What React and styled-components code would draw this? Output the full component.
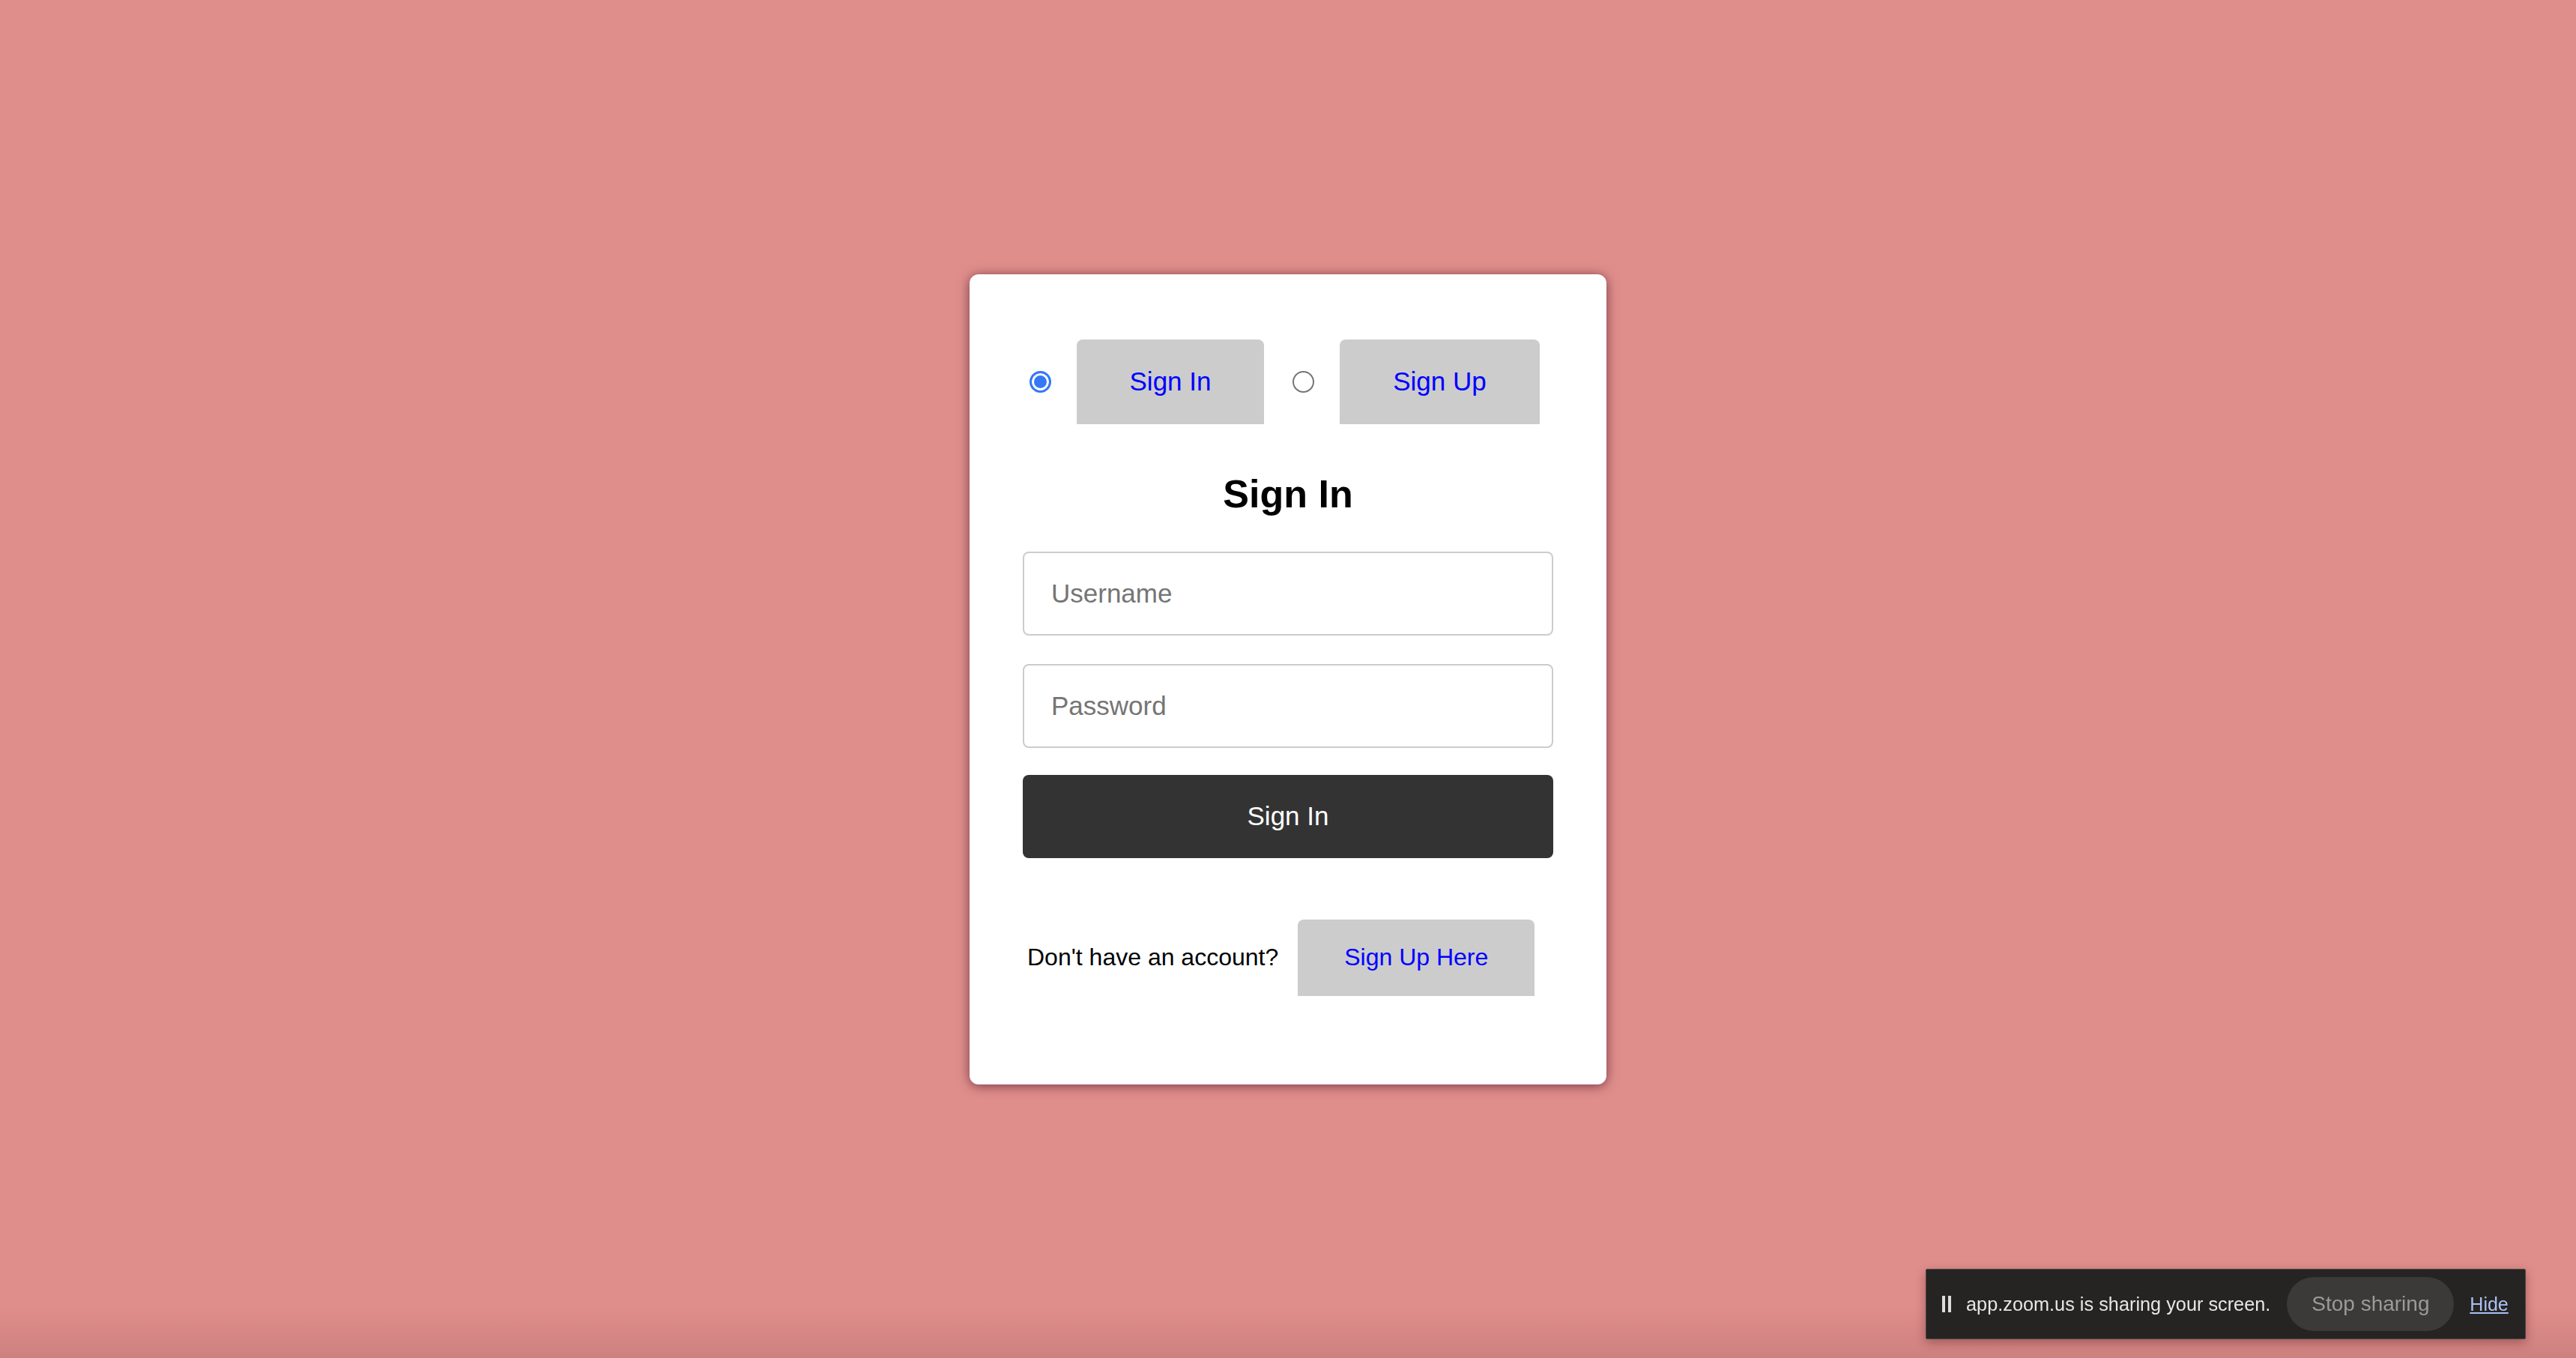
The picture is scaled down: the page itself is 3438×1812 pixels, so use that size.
import React, { useState } from "react";
import styled, { createGlobalStyle } from "styled-components";

const GlobalStyle = createGlobalStyle`
  html, body {
    margin: 0;
    padding: 0;
  }
  body {
    font-family: "Liberation Sans", Arial, Helvetica, sans-serif;
    background: linear-gradient(to bottom, #e08e8b 0, #e08e8b calc(100% - 70px), #cd817f 100%);
    min-height: 1812px;
  }
`;

const Page = styled.div`
  min-height: 1812px;
  display: flex;
  align-items: center;
  justify-content: center;
`;

const Card = styled.div`
  box-sizing: border-box;
  width: 850px;
  height: 1081px;
  background: #ffffff;
  border-radius: 12px;
  box-shadow: 0 2px 16px rgba(50, 0, 25, 0.6);
  padding: 87px 71px 0 71px;
  display: flex;
  flex-direction: column;
`;

const TabRow = styled.div`
  display: flex;
  align-items: center;
  padding-left: 9px;
`;

const Radio = styled.input.attrs({ type: "radio" })`
  appearance: none;
  -webkit-appearance: none;
  box-sizing: border-box;
  margin: 0 ${(p) => p.$gap}px 0 0;
  width: 29px;
  height: 29px;
  border-radius: 50%;
  border: 2px solid #767676;
  background: #ffffff;
  flex: none;
  &:checked {
    border: 3px solid #3478f6;
    background: #3478f6;
    box-shadow: inset 0 0 0 3px #ffffff;
  }
`;

const TabButton = styled.button`
  box-sizing: border-box;
  height: 113px;
  padding: 0 70px;
  min-width: ${(p) => p.$w}px;
  margin-right: ${(p) => p.$gap || 0}px;
  border: none;
  border-radius: 8px 8px 0 0;
  background: #cccccc;
  color: #0000ff;
  font-family: inherit;
  font-size: 35px;
  cursor: pointer;
`;

const Title = styled.h2`
  margin: 67px 0 51px 0;
  font-size: 52px;
  line-height: 1;
  font-weight: 700;
  text-align: center;
  color: #000000;
`;

const Field = styled.input`
  box-sizing: border-box;
  width: 100%;
  height: 112px;
  margin: 0 0 ${(p) => p.$gap}px 0;
  padding: 0 36px;
  border: 2px solid #cccccc;
  border-radius: 8px;
  font-family: inherit;
  font-size: 35px;
  color: #000;
  outline: none;
  &::placeholder {
    color: #757575;
  }
`;

const SubmitButton = styled.button`
  box-sizing: border-box;
  width: 100%;
  height: 111px;
  border: none;
  border-radius: 8px;
  background: #333333;
  color: #ffffff;
  font-family: inherit;
  font-size: 35px;
  cursor: pointer;
`;

const FooterRow = styled.div`
  display: flex;
  align-items: center;
  gap: 26px;
  margin-top: 82px;
  padding-left: 6px;
`;

const FooterText = styled.span`
  font-size: 32px;
  color: #000000;
`;

const SignUpHere = styled.button`
  box-sizing: border-box;
  height: 102px;
  width: 316px;
  border: none;
  border-radius: 8px 8px 0 0;
  background: #cccccc;
  color: #0000ff;
  font-family: inherit;
  font-size: 32px;
  cursor: pointer;
`;

const ShareBar = styled.div`
  position: fixed;
  left: 2570px;
  top: 1693px;
  box-sizing: border-box;
  width: 801px;
  height: 94px;
  background: #262422;
  border: 1px solid #4a4846;
  border-radius: 2px;
  box-shadow: 0 4px 14px rgba(60, 0, 20, 0.35);
  display: flex;
  align-items: center;
  padding-left: 21px;
  font-family: "Liberation Sans", Arial, Helvetica, sans-serif;
`;

const PauseIcon = styled.span`
  display: flex;
  gap: 4px;
  margin-right: 20px;
  & > i {
    display: block;
    width: 4px;
    height: 22px;
    background: #dcdcdc;
  }
`;

const ShareText = styled.span`
  font-size: 25.3px;
  color: #e6e6e6;
  white-space: nowrap;
`;

const StopButton = styled.button`
  box-sizing: border-box;
  margin-left: 22px;
  width: 223px;
  height: 72px;
  border: none;
  border-radius: 36px;
  background: #3c3a39;
  color: #9a9a9a;
  font-family: inherit;
  font-size: 28px;
  cursor: pointer;
`;

const HideLink = styled.a`
  margin-left: 21px;
  font-size: 25px;
  color: #a9c1f5;
  text-decoration: underline;
  cursor: pointer;
`;

export default function App() {
  const [mode, setMode] = useState("signin");
  return (
    <>
      <GlobalStyle />
      <Page>
        <Card>
          <TabRow>
            <Radio
              name="mode"
              $gap={34}
              checked={mode === "signin"}
              onChange={() => setMode("signin")}
            />
            <TabButton $gap={38} $w={250} onClick={() => setMode("signin")}>
              Sign In
            </TabButton>
            <Radio
              name="mode"
              $gap={34}
              checked={mode === "signup"}
              onChange={() => setMode("signup")}
            />
            <TabButton $w={267} onClick={() => setMode("signup")}>
              Sign Up
            </TabButton>
          </TabRow>
          <Title>Sign In</Title>
          <Field placeholder="Username" $gap={38} />
          <Field placeholder="Password" type="password" $gap={36} />
          <SubmitButton>Sign In</SubmitButton>
          <FooterRow>
            <FooterText>Don't have an account?</FooterText>
            <SignUpHere>Sign Up Here</SignUpHere>
          </FooterRow>
        </Card>
      </Page>
      <ShareBar>
        <PauseIcon>
          <i />
          <i />
        </PauseIcon>
        <ShareText>app.zoom.us is sharing your screen.</ShareText>
        <StopButton>Stop sharing</StopButton>
        <HideLink>Hide</HideLink>
      </ShareBar>
    </>
  );
}
